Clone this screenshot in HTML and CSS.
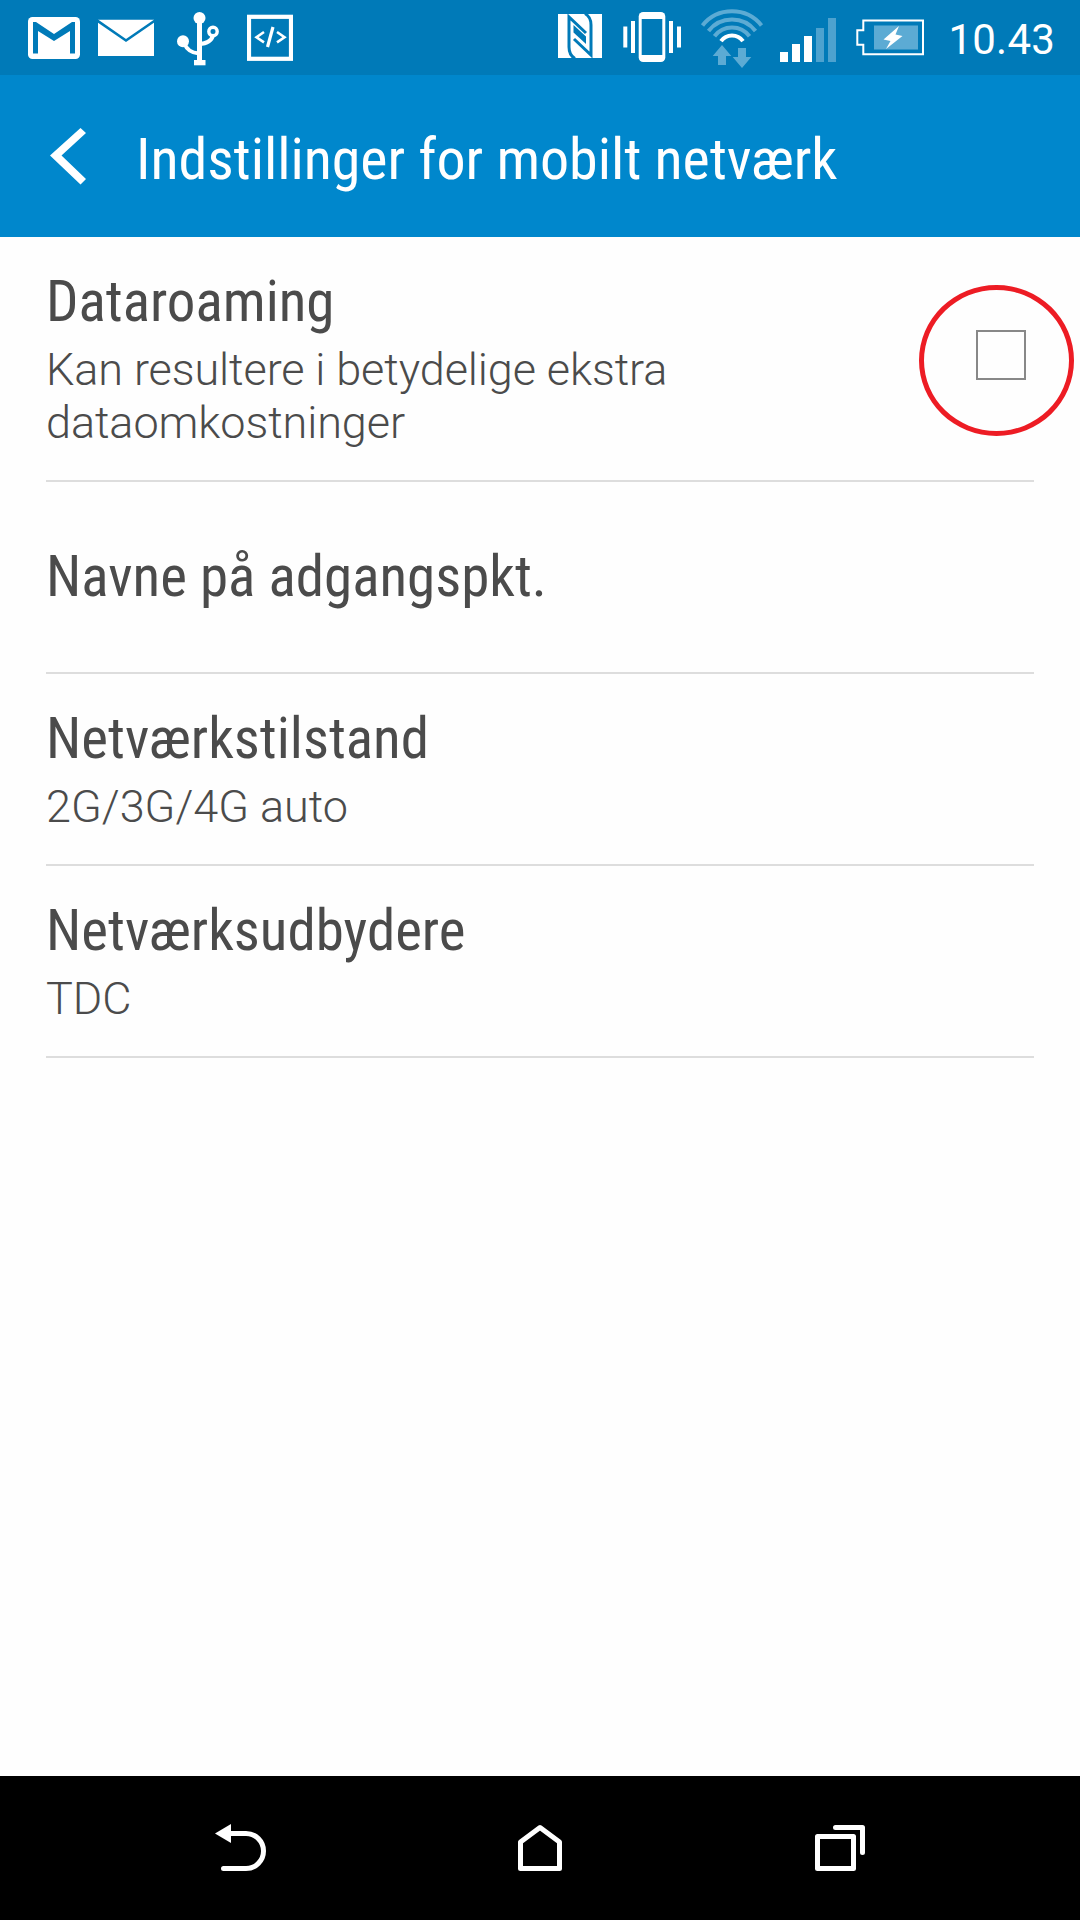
FILE: index.html
```
<!DOCTYPE html>
<html lang="da">
<head>
    <meta charset="UTF-8">
    <meta name="viewport" content="width=device-width, initial-scale=1.0">
    <title>Indstillinger for mobilt netværk</title>
    <link rel="stylesheet" href="styles.css">
</head>
<body>
    <div class="status-bar">
        <div class="status-left">
            <!-- gmail -->
            <svg width="52" height="75" viewBox="28 0 52 75">
                <rect x="28" y="17" width="52" height="42" rx="4.5" fill="#fff"/>
                <path class="cut" d="M33 22H36L54 34L72 22H75V53.5H70V31L54 41L38 31V53.5H33Z"/>
            </svg>
            <!-- mail -->
            <svg width="57" height="75" viewBox="98 0 57 75">
                <path fill="#fff" d="M98 19.7H154V56H98Z"/>
                <path fill="none" class="cut-line" stroke-width="2.6" d="M97 20.5L126 40.5L155 20.5"/>
            </svg>
            <!-- usb -->
            <svg width="42" height="75" viewBox="177 0 42 75">
                <g fill="none" stroke="#fff" stroke-width="4">
                    <path stroke-width="5" d="M199.5 18V62"/>
                    <path d="M184 43C187 50 191 53 199 53.5M199 44C208 43.5 212 40 213 35"/>
                    <circle cx="213" cy="31.5" r="4.2" stroke-width="3.4"/>
                </g>
                <g fill="#fff">
                    <circle cx="199.5" cy="18" r="6"/>
                    <circle cx="183" cy="41.3" r="6"/>
                    <rect x="194" y="60" width="11.5" height="5.3"/>
                </g>
            </svg>
            <!-- code -->
            <svg width="46" height="75" viewBox="247 0 46 75">
                <g fill="none" stroke="#fff">
                    <rect x="249" y="16.8" width="42" height="42" stroke-width="4.2"/>
                    <path stroke-width="2.6" d="M264 32L256.5 37.2L264 42.4M277 32L284.5 37.2L277 42.4"/>
                    <path stroke-width="3.2" d="M273 27L267.5 47"/>
                </g>
            </svg>
        </div>
        <div class="status-right">
            <!-- nfc -->
            <svg class="nfc" width="44" height="75" viewBox="558 0 44 75">
                <rect x="558" y="14" width="44" height="44" fill="#fff"/>
                <g fill="none" class="cut-line" stroke-width="3">
                    <path d="M575 58.5C570.5 56 569 53 569 47V17L586 33"/>
                    <path d="M585 13.5C589.5 16 591 19 591 25V55L574 39"/>
                </g>
                <path class="cut" d="M573.5 25L586 36.5V44L573.5 32.5V25Z"/>
            </svg>
            <!-- vibrate -->
            <svg class="vibrate" width="58" height="75" viewBox="623 0 58 75">
                <g fill="#fff">
                    <rect x="638.7" y="12" width="26.6" height="50" rx="4.5"/>
                    <rect x="623.3" y="26.5" width="4" height="21"/>
                    <rect x="631" y="21" width="4" height="32"/>
                    <rect x="669" y="21" width="4" height="32"/>
                    <rect x="677" y="26.5" width="4" height="21"/>
                </g>
                <rect class="cut" x="641.7" y="19" width="20.6" height="36"/>
            </svg>
            <!-- wifi -->
            <svg class="wifi" width="64" height="75" viewBox="700 0 64 75">
                <g fill="none" stroke="#5cabd4" stroke-width="4">
                    <path d="M702.5 25.5A37.8 37.8 0 0 1 761.5 25.5"/>
                    <path d="M708.5 31A29.7 29.7 0 0 1 755.5 31"/>
                    <path d="M714.5 36.2A21.8 21.8 0 0 1 749.5 36.2"/>
                </g>
                <path fill="none" stroke="#fff" stroke-width="4" d="M721 41.2A13.5 13.5 0 0 1 743 41.2"/>
                <path fill="#5cabd4" d="M722 45L731.3 56H726V65H718V56H712.7ZM738 48H746V57H751.3L742 68L732.7 57H738Z"/>
            </svg>
            <!-- signal -->
            <svg width="56" height="75" viewBox="780 0 56 75">
                <path fill="#fff" d="M780 52H788V62H780ZM792 44H800V62H792ZM804 36H812V62H804Z"/>
                <path fill="#4da2cf" d="M816 28H824V62H816ZM828 18H836V62H828Z"/>
            </svg>
            <!-- battery -->
            <svg width="68" height="75" viewBox="856 0 68 75">
                <path fill="none" stroke="#fff" stroke-width="2" d="M863.3 20.5H923V54.3H863.3V44.7H857.3V30.3H863.3Z"/>
                <rect x="874" y="25.5" width="44" height="24" fill="#5cabd4"/>
                <path fill="#fff" d="M899 26L883.5 39.5L890.5 41L886 49L902.5 36L895.5 34.5Z"/>
            </svg>
            <span class="clock">10.43</span>
        </div>
    </div>
    <div class="header">
        <svg class="back" width="36" height="57" viewBox="50 128 36 57">
            <path fill="#fff" d="M80.5 128L86 133L61.5 155.5L86 179L80.5 184.5L50 155.5Z"/>
        </svg>
        <h1>Indstillinger for mobilt netværk</h1>
    </div>
    <div class="list">
        <div class="item">
            <div class="text">
                <h2>Dataroaming</h2>
                <p class="long">Kan resultere i betydelige ekstra<br>dataomkostninger</p>
            </div>
            <div class="checkbox"><span class="circle"></span></div>
        </div>
        <div class="item">
            <h2>Navne på adgangspkt.</h2>
        </div>
        <div class="item">
            <div class="text">
                <h2>Netværkstilstand</h2>
                <p>2G/3G/4G auto</p>
            </div>
        </div>
        <div class="item">
            <div class="text">
                <h2>Netværksudbydere</h2>
                <p>TDC</p>
            </div>
        </div>
    </div>
    <div class="nav-bar">
        <svg width="52" height="48" viewBox="215 1824 52 48">
            <path fill="#fff" d="M215 1833.5L231 1824V1843Z"/>
            <path fill="none" stroke="#fff" stroke-width="5" stroke-linecap="round" d="M230 1833.5H246A17.5 17.5 0 0 1 246 1868.5H223.5"/>
        </svg>
        <svg class="home" width="46" height="48" viewBox="517 1824 46 48">
            <path fill="none" stroke="#fff" stroke-width="5" stroke-linejoin="round" d="M520.5 1868.5V1842L540 1827.5L559.5 1842V1868.5Z"/>
        </svg>
        <svg width="52" height="48" viewBox="814 1824 52 48">
            <g fill="none" stroke="#fff" stroke-width="5" stroke-linejoin="round" stroke-linecap="round">
                <rect x="817.5" y="1836.5" width="36" height="32"/>
                <path d="M835.5 1827.5H862.5V1852.5"/>
            </g>
        </svg>
    </div>
</body>
</html>
```
FILE: styles.css
```
* {
    box-sizing: border-box;
    margin: 0;
    padding: 0;
}
body {
    font-family: Roboto, "Liberation Sans", sans-serif;
    background-color: #fefefe;
    color: #4b4b4b;
    display: flex;
    flex-direction: column;
    height: 1920px;
    overflow: hidden;
}
svg {
    display: block;
    flex-shrink: 0;
}
.cut {
    fill: #007ab8;
}
.cut-line {
    stroke: #007ab8;
}
.status-bar {
    height: 75px;
    background-color: #007ab8;
    display: flex;
    justify-content: space-between;
    padding: 0 25px 0 28px;
}
.status-left, .status-right {
    display: flex;
}
.status-left {
    gap: 22px;
}
.status-left svg:first-child {
    margin-right: -4px;
}
.status-left svg:last-child {
    margin-left: 6px;
}
.status-right {
    gap: 20px;
}
.nfc {
    margin-right: 1px;
}
.vibrate {
    margin-right: -1px;
}
.wifi {
    margin-right: -4px;
}
.clock {
    color: #fff;
    font-size: 42px;
    line-height: 79px;
    letter-spacing: 0.2px;
    margin-left: 5px;
}
.header {
    height: 162px;
    background-color: #0087cc;
    display: flex;
    align-items: center;
    padding-left: 50px;
    gap: 50px;
}
h1, h2 {
    font-family: "Roboto Condensed", Roboto, sans-serif;
    font-stretch: 75%;
    font-weight: 400;
    white-space: nowrap;
}
h1 {
    color: #fff;
    font-size: 58px;
    line-height: 68px;
    letter-spacing: -0.06px;
    padding-top: 6px;
}
h2 {
    font-size: 57px;
    line-height: 66px;
}
.list {
    flex: 1;
    padding: 0 46px;
}
.item {
    display: flex;
    justify-content: space-between;
    align-items: center;
    height: 192px;
    border-bottom: 2px solid #ddd;
}
.item:first-child {
    height: 245px;
}
.text {
    align-self: flex-start;
    padding-top: 32px;
}
p {
    font-size: 45px;
    font-weight: 300;
    line-height: 53px;
    margin-top: 8px;
    white-space: nowrap;
}
.long {
    letter-spacing: -0.09px;
}
.checkbox {
    position: relative;
    align-self: flex-start;
    width: 50px;
    height: 50px;
    margin: 93px 8px 0 0;
    border: 2px solid #888;
}
.circle {
    position: absolute;
    left: -59px;
    top: -47px;
    width: 155px;
    height: 151px;
    border: 5px solid #ed1c24;
    border-radius: 50%;
}
.nav-bar {
    height: 144px;
    background-color: #000;
    display: flex;
    justify-content: space-between;
    align-items: center;
    padding: 0 214px 0 215px;
}
.home {
    margin-right: 1px;
}
```
